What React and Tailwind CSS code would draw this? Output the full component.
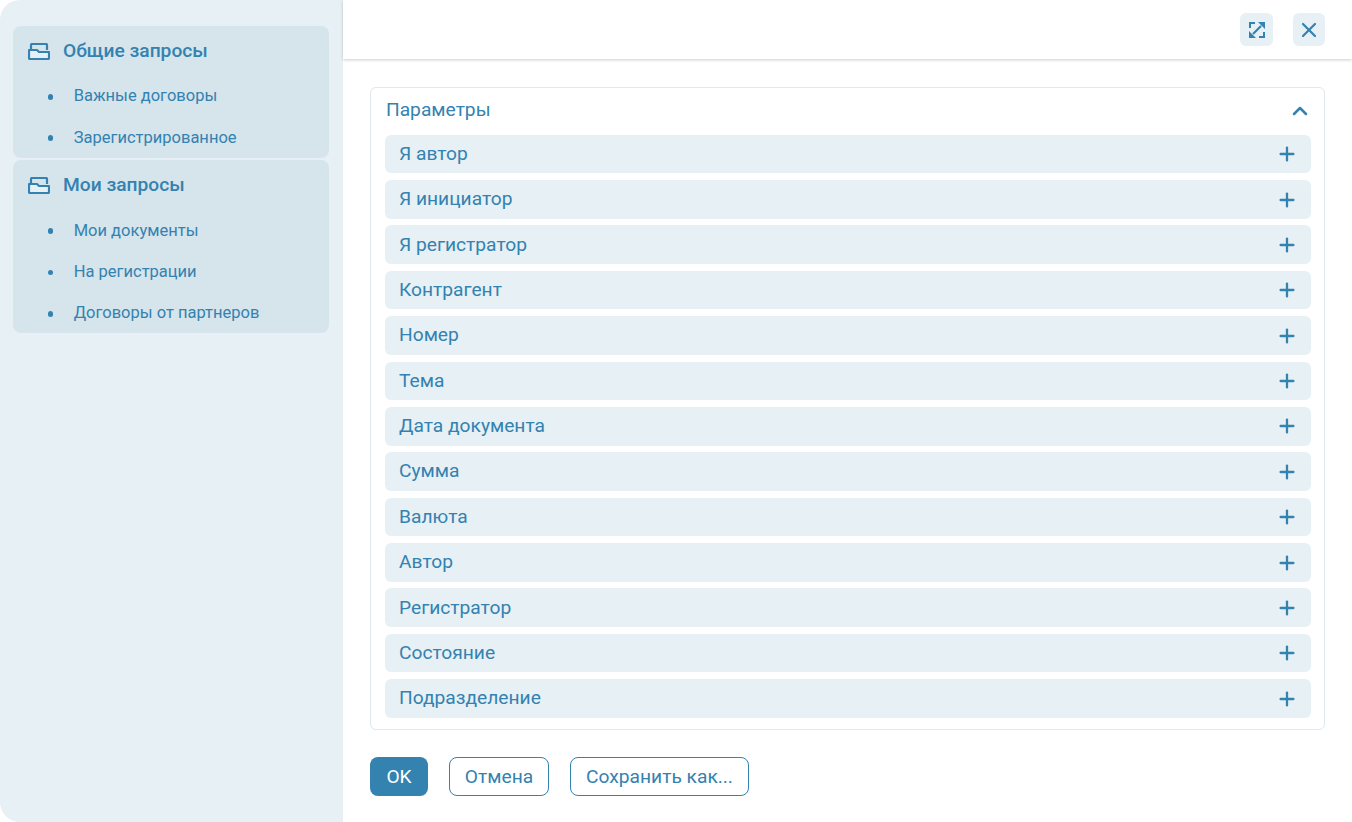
import { ChevronUp, Plus, X } from "lucide-react";

const FIELDS = [
  "Я автор",
  "Я инициатор",
  "Я регистратор",
  "Контрагент",
  "Номер",
  "Тема",
  "Дата документа",
  "Сумма",
  "Валюта",
  "Автор",
  "Регистратор",
  "Состояние",
  "Подразделение",
];

const GROUPS = [
  { title: "Общие запросы", items: ["Важные договоры", "Зарегистрированное"] },
  { title: "Мои запросы", items: ["Мои документы", "На регистрации", "Договоры от партнеров"] },
];

const FolderIcon = () => (
  <svg width="22" height="17" viewBox="0 0 22 17" fill="none" stroke="#3382b0" strokeWidth="2.200" strokeLinejoin="round">
    <path d="M3 6V2a1 1 0 0 1 1-1h14a1 1 0 0 1 1 1v5" />
    <path d="M1 7h8l2 2h10v6a1 1 0 0 1-1 1H2a1 1 0 0 1-1-1z" fill="#e6f0f5" />
  </svg>
);

const ExpandIcon = () => (
  <svg width="16" height="16" viewBox="0 0 16 16" fill="#3382b0">
    <path d="M4 12L12 4" stroke="#3382b0" strokeWidth="2.200" />
    <path d="M9 0h7v7zM0 9v7h7z" />
    <path d="M1 6V1h5M15 10v5h-5" fill="none" stroke="#3382b0" strokeWidth="2" />
  </svg>
);

const SidebarGroup = ({ title, items }) => (
  <div className="rounded-lg bg-[#d6e4ec]">
    <div className="flex h-[49px] items-center pl-[15px] pt-[2px] text-[19.2px] font-medium text-[#3382b0]">
      <FolderIcon />
      <span className="ml-[13px]">{title}</span>
    </div>
    <ul>
      {items.map((item) => (
        <li key={item} className="flex h-[41.4px] items-center pl-[34.5px] pt-[2.3px] text-[16.5px] text-[#3382b0]">
          <span className="h-[5.5px] w-[5.5px] rounded-full bg-[#3382b0]" />
          <span className="ml-[20.7px]">{item}</span>
        </li>
      ))}
    </ul>
  </div>
);

export default function App() {
  return (
    <div className="flex h-[822px] w-[1352px] overflow-hidden rounded-[20px] bg-white font-['Roboto',sans-serif]">
      <aside className="flex w-[343px] shrink-0 flex-col gap-[2.4px] bg-[#e6f0f5] pl-[13px] pr-[14px] pt-[26px]">
        {GROUPS.map((group) => (
          <SidebarGroup key={group.title} {...group} />
        ))}
      </aside>
      <main className="flex min-w-0 flex-1 flex-col">
        <header className="flex h-[59px] shrink-0 items-start justify-end gap-[20px] pr-[27px] pt-[13px] shadow-[0_1px_3px_rgba(0,0,0,0.2)]">
          <button className="flex h-[33px] w-[33px] items-center justify-center rounded-md bg-[#e6f0f5]">
            <ExpandIcon />
          </button>
          <button className="flex h-[33px] w-[32px] items-center justify-center rounded-md bg-[#e6f0f5] text-[#3382b0]">
            <X size={24} strokeWidth={2.200} />
          </button>
        </header>
        <div className="flex flex-1 flex-col px-[27px] pt-[28px]">
          <section className="h-[643px] rounded-md border border-[#dde8ef] pl-[14px] pr-[13px]">
            <div className="mb-[1.7px] flex h-[45px] items-center justify-between pl-px text-[19.2px] text-[#3382b0]">
              <span>Параметры</span>
              <ChevronUp size={24} strokeWidth={2.500} className="mr-[-1px]" />
            </div>
            <div className="flex flex-col gap-[6.79px]">
              {FIELDS.map((field) => (
                <div
                  key={field}
                  className="flex h-[38.6px] items-center justify-between rounded-md bg-[#e6f0f5] pl-[14px] pr-[13px] pt-[0.5px] text-[19.2px] text-[#3382b0]"
                >
                  <span>{field}</span>
                  <Plus size={22} strokeWidth={2.500} />
                </div>
              ))}
            </div>
          </section>
          <div className="mt-[27px] flex gap-[21px] text-[19.2px]">
            <button className="flex h-[39px] w-[58px] items-center justify-center rounded-lg bg-[#3382b0] pt-px text-white">
              OK
            </button>
            <button className="flex h-[39px] w-[100px] items-center justify-center rounded-lg border border-[#3382b0] pt-px text-[#3382b0]">
              Отмена
            </button>
            <button className="flex h-[39px] w-[179px] items-center justify-center rounded-lg border border-[#3382b0] pt-px text-[#3382b0]">
              Сохранить как...
            </button>
          </div>
        </div>
      </main>
    </div>
  );
}
